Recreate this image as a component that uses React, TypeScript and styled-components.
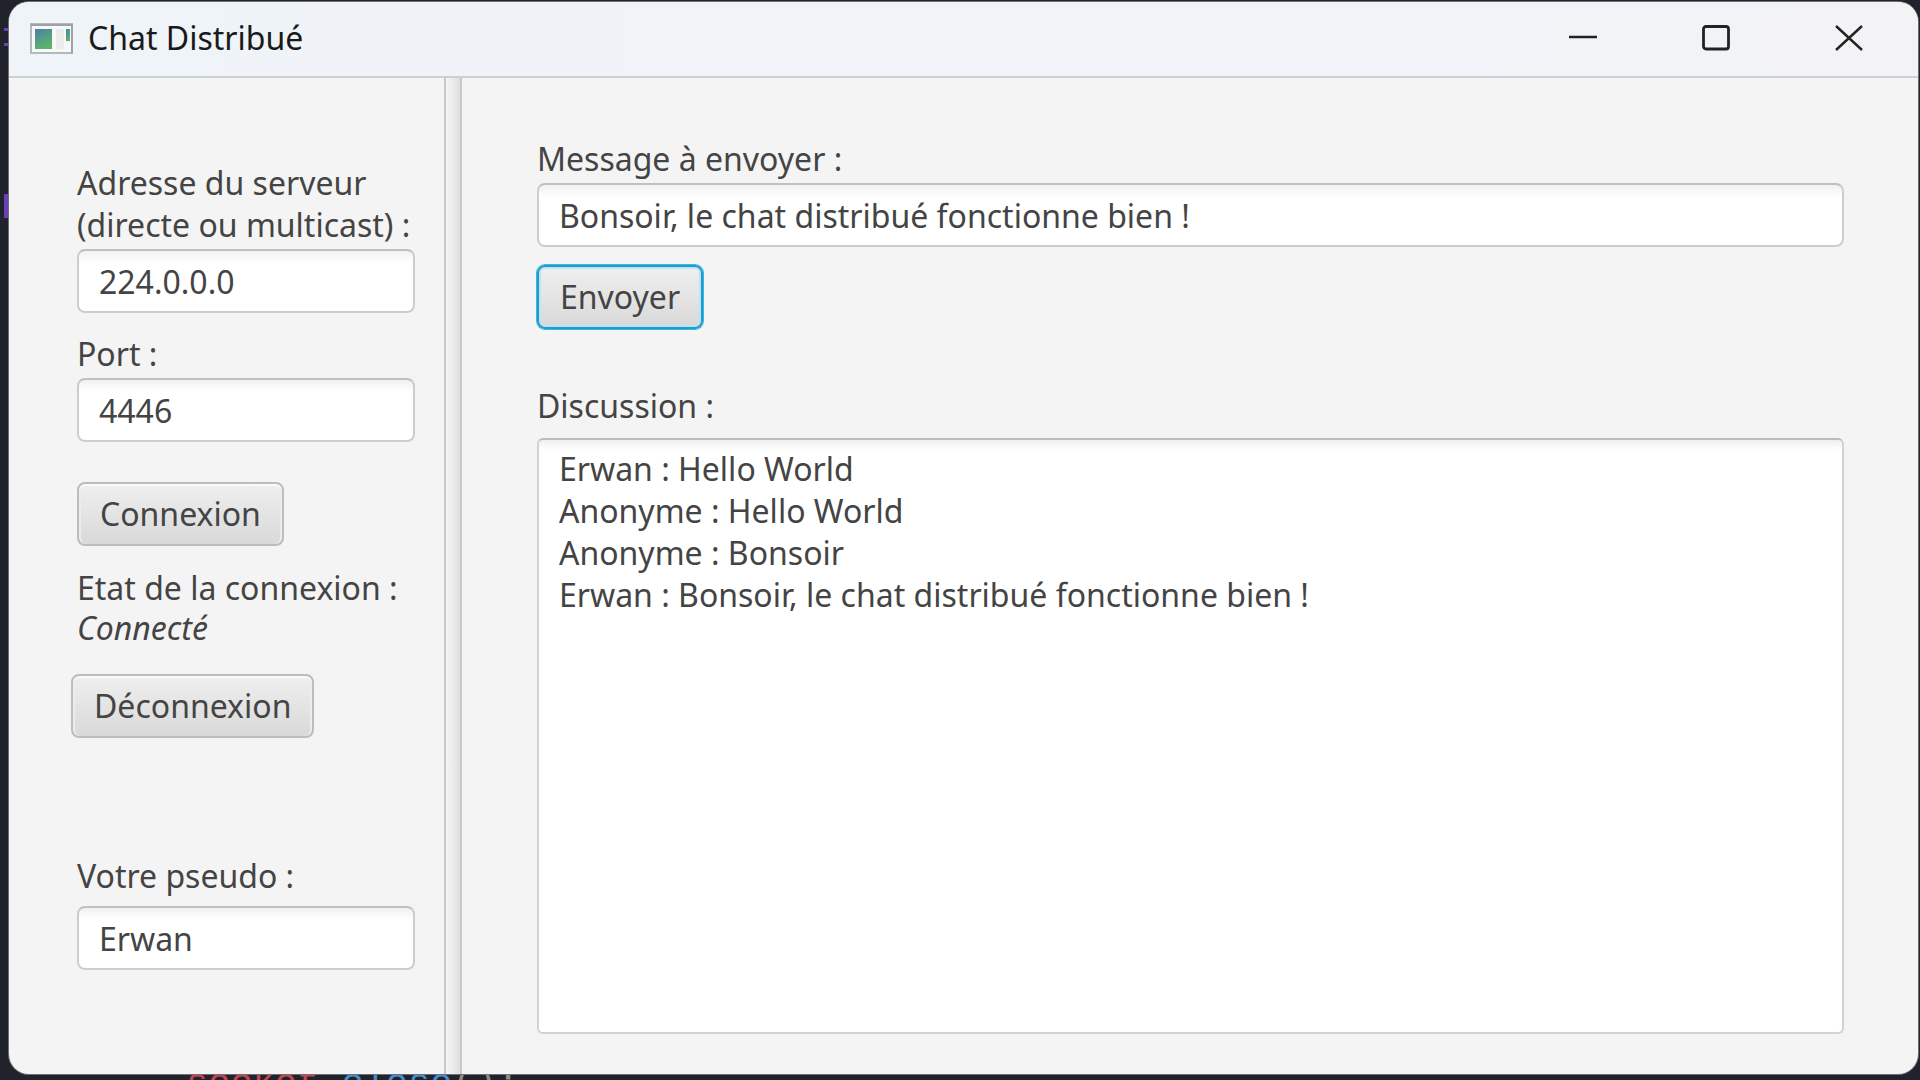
import React, { useState } from "react";
import styled, { createGlobalStyle } from "styled-components";

const GlobalStyle = createGlobalStyle`
  *, *::before, *::after { box-sizing: border-box; }
  html, body { margin: 0; height: 100%; }
  #root { height: 100%; }
  body, button, input, textarea {
    font-family: "Noto Sans", "Open Sans", sans-serif;
    font-size: 32px;
    line-height: 42px;
    color: #444444;
  }
`;

const Desktop = styled.div`
  position: relative;
  display: flex;
  height: 100vh;
  padding: 2px 2px 6px 9px;
  overflow: hidden;
  background: #20232b;
`;

const EditorLine = styled.div`
  position: absolute;
  left: 186px;
  bottom: -24px;
  font-family: "Liberation Mono", monospace;
  font-size: 37px;
  line-height: 40px;
  color: #8f8a86;
`;

const EditorToken = styled.span<{ $tone: string }>`
  color: ${(p) => p.$tone};
`;

const EditorMark = styled.span<{ $top: number; $height: number }>`
  position: absolute;
  left: 4px;
  top: ${(p) => p.$top}px;
  width: 8px;
  height: ${(p) => p.$height}px;
  background: #6a3fb8;
`;

const Window = styled.main`
  position: relative;
  flex: 1;
  display: flex;
  flex-direction: column;
  overflow: hidden;
  border-radius: 20px;
  background: #f4f4f4;
  box-shadow: 0 0 0 1px #6d6f74;
`;

const TitleBar = styled.header`
  display: flex;
  align-items: center;
  height: 76px;
  padding: 0 3px 2px 21px;
  background: linear-gradient(90deg, #eff4f8, #f1f3f8 75%, #f3f3f5);
  border-bottom: 2px solid #cdd0d0;
`;

const Title = styled.h1`
  flex: 1;
  margin: 0 0 0 15px;
  font-size: 32px;
  font-weight: 400;
  color: #1a1a1a;
`;

const CaptionButton = styled.button`
  display: grid;
  place-items: center;
  width: 133px;
  height: 72px;
  padding: 0;
  border: 0;
  background: transparent;
`;

const Body = styled.div`
  flex: 1;
  display: flex;
  min-height: 0;
`;

const SidePane = styled.aside`
  flex: 0 0 435px;
  display: flex;
  flex-direction: column;
  align-items: flex-start;
  padding: 84px 29px 0 62px;
`;

const Divider = styled.div`
  flex: 0 0 18px;
  border: solid #c8c8c8;
  border-width: 0 2px;
  background: linear-gradient(90deg, #f4f4f4, #ececec 50%, #dedede);
`;

const Group = styled.section<{ $space?: number }>`
  align-self: stretch;
  display: flex;
  flex-direction: column;
  align-items: flex-start;
  padding-left: 6px;
  margin-top: ${(p) => p.$space ?? 0}px;
`;

const Label = styled.label`
  display: block;
  white-space: nowrap;
`;

const Status = styled.output`
  font-style: italic;
  line-height: 38px;
`;

const TextField = styled.input<{ $gap?: number }>`
  width: 100%;
  height: 64px;
  margin-top: ${(p) => p.$gap ?? 3}px;
  padding: 0 20px;
  border: 2px solid #cdcdcd;
  border-top-color: #c0c0c0;
  border-radius: 8px;
  outline: 0;
  background: linear-gradient(#f1f1f1, #ffffff 12px);
`;

const PushButton = styled.button<{ $space: number; $active?: boolean }>`
  height: 64px;
  margin-top: ${(p) => p.$space}px;
  padding: 0 21px;
  border: 2px solid ${(p) => (p.$active ? "#189fd0" : "#bdbdbd")};
  border-radius: 8px;
  background: linear-gradient(#efefef, #d9d9d9);
  box-shadow: ${(p) =>
    p.$active
      ? "0 0 0 1px #3fb4de, inset 0 0 0 2px #c3e2ee"
      : "inset 0 2px 0 #fafafa, inset 2px 0 0 #ececec, inset -2px 0 0 #ececec"};
`;

const ChatPane = styled.section`
  flex: 1;
  display: flex;
  flex-direction: column;
  align-items: flex-start;
  padding: 60px 74px 40px 75px;
`;

const DiscussionLabel = styled(Label)`
  margin-top: 56px;
`;

const Discussion = styled.textarea`
  flex: 1;
  width: 100%;
  margin-top: 11px;
  padding: 8px 20px;
  border: 2px solid #d2d2d2;
  border-top-color: #bcbcbc;
  border-radius: 6px;
  outline: 0;
  resize: none;
  background: linear-gradient(#efefef, #ffffff 10px);
`;

const AppIcon = () => (
  <svg width="43" height="31" viewBox="0 0 43 31" aria-hidden="true">
    <defs>
      <linearGradient id="pane" x1="0" y1="0" x2="0.4" y2="1">
        <stop offset="0" stopColor="#4a80a8" />
        <stop offset="1" stopColor="#5bb46c" />
      </linearGradient>
    </defs>
    <rect x="1" y="1" width="41" height="29" fill="#f8f8f8" stroke="#b4b8be" strokeWidth="2" />
    <path d="M1 2h41v28" fill="none" stroke="#9da2aa" strokeWidth="2" />
    <rect x="5" y="6" width="17" height="20" fill="url(#pane)" />
    <rect x="26" y="6" width="8" height="20" fill="#ececec" />
    <rect x="36" y="6" width="4" height="12" fill="url(#pane)" />
  </svg>
);

const DISCUSSION = [
  "Erwan : Hello World",
  "Anonyme : Hello World",
  "Anonyme : Bonsoir",
  "Erwan : Bonsoir, le chat distribué fonctionne bien !",
].join("\n");

export default function App() {
  const [server, setServer] = useState("224.0.0.0");
  const [port, setPort] = useState("4446");
  const [nickname, setNickname] = useState("Erwan");
  const [message, setMessage] = useState("Bonsoir, le chat distribué fonctionne bien !");

  return (
    <Desktop>
      <GlobalStyle />
      <EditorMark $top={28} $height={3} />
      <EditorMark $top={43} $height={3} />
      <EditorMark $top={194} $height={24} />
      <EditorLine aria-hidden="true">
        <EditorToken $tone="#c8434f">socket</EditorToken>.
        <EditorToken $tone="#3f8fd6">close</EditorToken>();
      </EditorLine>
      <Window>
        <TitleBar>
          <AppIcon />
          <Title>Chat Distribué</Title>
          <CaptionButton aria-label="Réduire">
            <svg width="28" height="26" viewBox="0 0 28 26" fill="none" stroke="#222" strokeWidth="2.6">
              <path d="M0 12h28" />
            </svg>
          </CaptionButton>
          <CaptionButton aria-label="Agrandir">
            <svg width="28" height="26" viewBox="0 0 28 26" fill="none" stroke="#222" strokeWidth="2.8">
              <rect x="1.5" y="1.5" width="25" height="22.5" rx="2.5" />
            </svg>
          </CaptionButton>
          <CaptionButton aria-label="Fermer">
            <svg width="28" height="26" viewBox="0 0 28 26" fill="none" stroke="#222" strokeWidth="2.4">
              <path d="M1 1l26 24M27 1L1 25" />
            </svg>
          </CaptionButton>
        </TitleBar>
        <Body>
          <SidePane>
            <Group>
              <Label htmlFor="server">
                Adresse du serveur
                <br />
                (directe ou multicast) :
              </Label>
              <TextField id="server" value={server} onChange={(e) => setServer(e.target.value)} />
            </Group>
            <Group $space={20}>
              <Label htmlFor="port">Port :</Label>
              <TextField id="port" value={port} onChange={(e) => setPort(e.target.value)} />
              <PushButton $space={40}>Connexion</PushButton>
            </Group>
            <Group $space={21}>
              <Label htmlFor="status">Etat de la connexion :</Label>
              <Status id="status">Connecté</Status>
            </Group>
            <PushButton $space={27}>Déconnexion</PushButton>
            <Group $space={117}>
              <Label htmlFor="nickname">Votre pseudo :</Label>
              <TextField
                id="nickname"
                $gap={9}
                value={nickname}
                onChange={(e) => setNickname(e.target.value)}
              />
            </Group>
          </SidePane>
          <Divider />
          <ChatPane>
            <Label htmlFor="message">Message à envoyer :</Label>
            <TextField id="message" value={message} onChange={(e) => setMessage(e.target.value)} />
            <PushButton $space={18} $active>
              Envoyer
            </PushButton>
            <DiscussionLabel htmlFor="discussion">Discussion :</DiscussionLabel>
            <Discussion id="discussion" readOnly value={DISCUSSION} />
          </ChatPane>
        </Body>
      </Window>
    </Desktop>
  );
}
